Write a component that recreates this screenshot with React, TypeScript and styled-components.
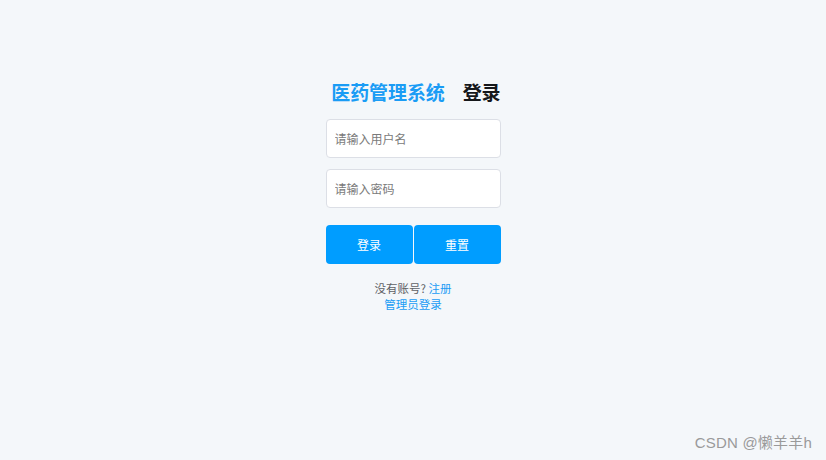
import React from "react";
import styled, { createGlobalStyle } from "styled-components";

const Global = createGlobalStyle`
  html, body { margin: 0; padding: 0; }
  body {
    background: #f4f7fa;
    font-family: "Noto Sans CJK SC", "Noto Sans", sans-serif;
  }
`;

const Page = styled.div`
  position: relative;
  width: 826px;
  height: 460px;
  background: #f4f7fa;
  display: flex;
  justify-content: center;
  overflow: hidden;
`;

const Panel = styled.div`
  width: 175px;
  padding-top: 78px;
  display: flex;
  flex-direction: column;
  align-items: stretch;
`;

const TitleRow = styled.div`
  display: flex;
  justify-content: flex-end;
  gap: 18px;
  font-size: 19px;
  font-weight: 700;
  line-height: 28px;
  height: 28px;
  white-space: nowrap;
`;

const Title = styled.span<{ $accent?: boolean }>`
  color: ${(p) => (p.$accent ? "#1a9cf5" : "#15171a")};
  letter-spacing: -0.1px;
`;

const Input = styled.input`
  box-sizing: border-box;
  width: 175px;
  height: 39px;
  border: 1px solid #dcdfe6;
  border-radius: 4px;
  background: #fff;
  padding: 0 8px;
  font-size: 12px;
  font-family: inherit;
  color: #333;
  outline: none;
  &::placeholder { color: #7a7a7a; }
`;

const Fields = styled.div`
  display: flex;
  flex-direction: column;
  gap: 11px;
  margin-top: 13px;
`;

const ButtonGroup = styled.div`
  display: flex;
  margin-top: 17px;
`;

const Button = styled.button`
  flex: 1;
  height: 39px;
  border: none;
  border-radius: 4px;
  background: #009dff;
  color: #fff;
  font-size: 12px;
  font-family: inherit;
  cursor: pointer;
  & + & { margin-left: 1px; }
`;

const Links = styled.div`
  margin-top: 16px;
  text-align: center;
  font-size: 11.5px;
  line-height: 16px;
  color: #606266;
`;

const Link = styled.a`
  color: #1a9cf5;
  text-decoration: none;
`;

const Watermark = styled.div`
  position: absolute;
  right: 14px;
  bottom: 8px;
  font-family: "Liberation Sans", "Noto Sans CJK SC", sans-serif;
  font-size: 15px;
  color: #9a9a9a;
  letter-spacing: 0.2px;
`;

export default function App() {
  return (
    <Page>
      <Global />
      <Panel>
        <TitleRow>
          <Title $accent>医药管理系统</Title>
          <Title>登录</Title>
        </TitleRow>
        <Fields>
          <Input placeholder="请输入用户名" />
          <Input placeholder="请输入密码" type="password" />
        </Fields>
        <ButtonGroup>
          <Button>登录</Button>
          <Button>重置</Button>
        </ButtonGroup>
        <Links>
          <div>
            没有账号? <Link href="#">注册</Link>
          </div>
          <div>
            <Link href="#">管理员登录</Link>
          </div>
        </Links>
      </Panel>
      <Watermark>CSDN @懒羊羊h</Watermark>
    </Page>
  );
}
